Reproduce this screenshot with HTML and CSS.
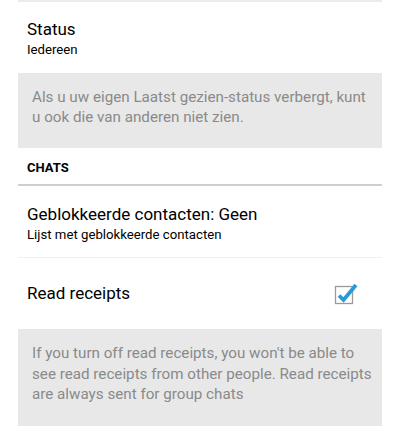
FILE: index.html
```html
<!DOCTYPE html>
<html>
<head>
<meta charset="utf-8">
<link rel="stylesheet" href="styles.css">
</head>
<body>
<div class="page">
  <div class="strip"></div>
  <div class="item status">
    <div class="title">Status</div>
    <div class="sub">Iedereen</div>
  </div>
  <div class="note note-first">Als u uw eigen Laatst gezien-status verbergt, kunt<br>u ook die van anderen niet zien.</div>
  <div class="section">CHATS</div>
  <div class="item blocked">
    <div class="title">Geblokkeerde contacten: Geen</div>
    <div class="sub">Lijst met geblokkeerde contacten</div>
  </div>
  <div class="item receipts">
    <div class="title">Read receipts</div>
    <svg class="check" width="24" height="24" viewBox="0 0 24 24">
      <rect x="1.5" y="5.5" width="17" height="17" fill="#fff" stroke="#9a9a9a" stroke-width="1.3"/>
      <path d="M5 14.5 L9.5 19 L22 4" fill="none" stroke="#2a9ad6" stroke-width="3.8" stroke-linecap="butt" stroke-linejoin="miter"/>
    </svg>
  </div>
  <div class="note note-second">If you turn off read receipts, you won't be able to<br>see read receipts from other people. Read receipts<br>are always sent for group chats</div>
</div>
</body>
</html>
```
FILE: styles.css
```css
html, body {
  margin: 0;
  padding: 0;
  background: #fff;
}
body {
  font-family: Roboto, "Noto Sans", sans-serif;
  color: #000;
}
.page {
  margin: 0 18px;
  display: flex;
  flex-direction: column;
}
.strip {
  height: 2px;
  background: #ececec;
}
.item {
  padding-left: 9px;
  padding-right: 9px;
}
.title {
  font-size: 17px;
  line-height: 20px;
}
.sub {
  font-size: 13.2px;
  line-height: 16px;
  margin-top: 3px;
}
.status {
  padding-top: 17px;
  padding-bottom: 15px;
}
.note {
  background: #e8e8e8;
  color: #8a8a8a;
  font-size: 15.2px;
  line-height: 20px;
  padding: 14px 2px 21px 14px;
  white-space: nowrap;
}
.note-second {
  line-height: 20.5px;
  padding-top: 14px;
  padding-bottom: 21px;
}
.section {
  font-size: 13px;
  font-weight: bold;
  line-height: 16px;
  padding: 12px 9px 8px;
  border-bottom: 2px solid #cfcfcf;
}
.blocked {
  padding-top: 18px;
  padding-bottom: 14px;
  border-bottom: 1px solid #efefef;
}
.receipts {
  display: flex;
  align-items: center;
  justify-content: space-between;
  padding-top: 25px;
  padding-bottom: 26px;
  height: 20px;
  padding-right: 24px;
}
.check {
  display: block;
}
```
